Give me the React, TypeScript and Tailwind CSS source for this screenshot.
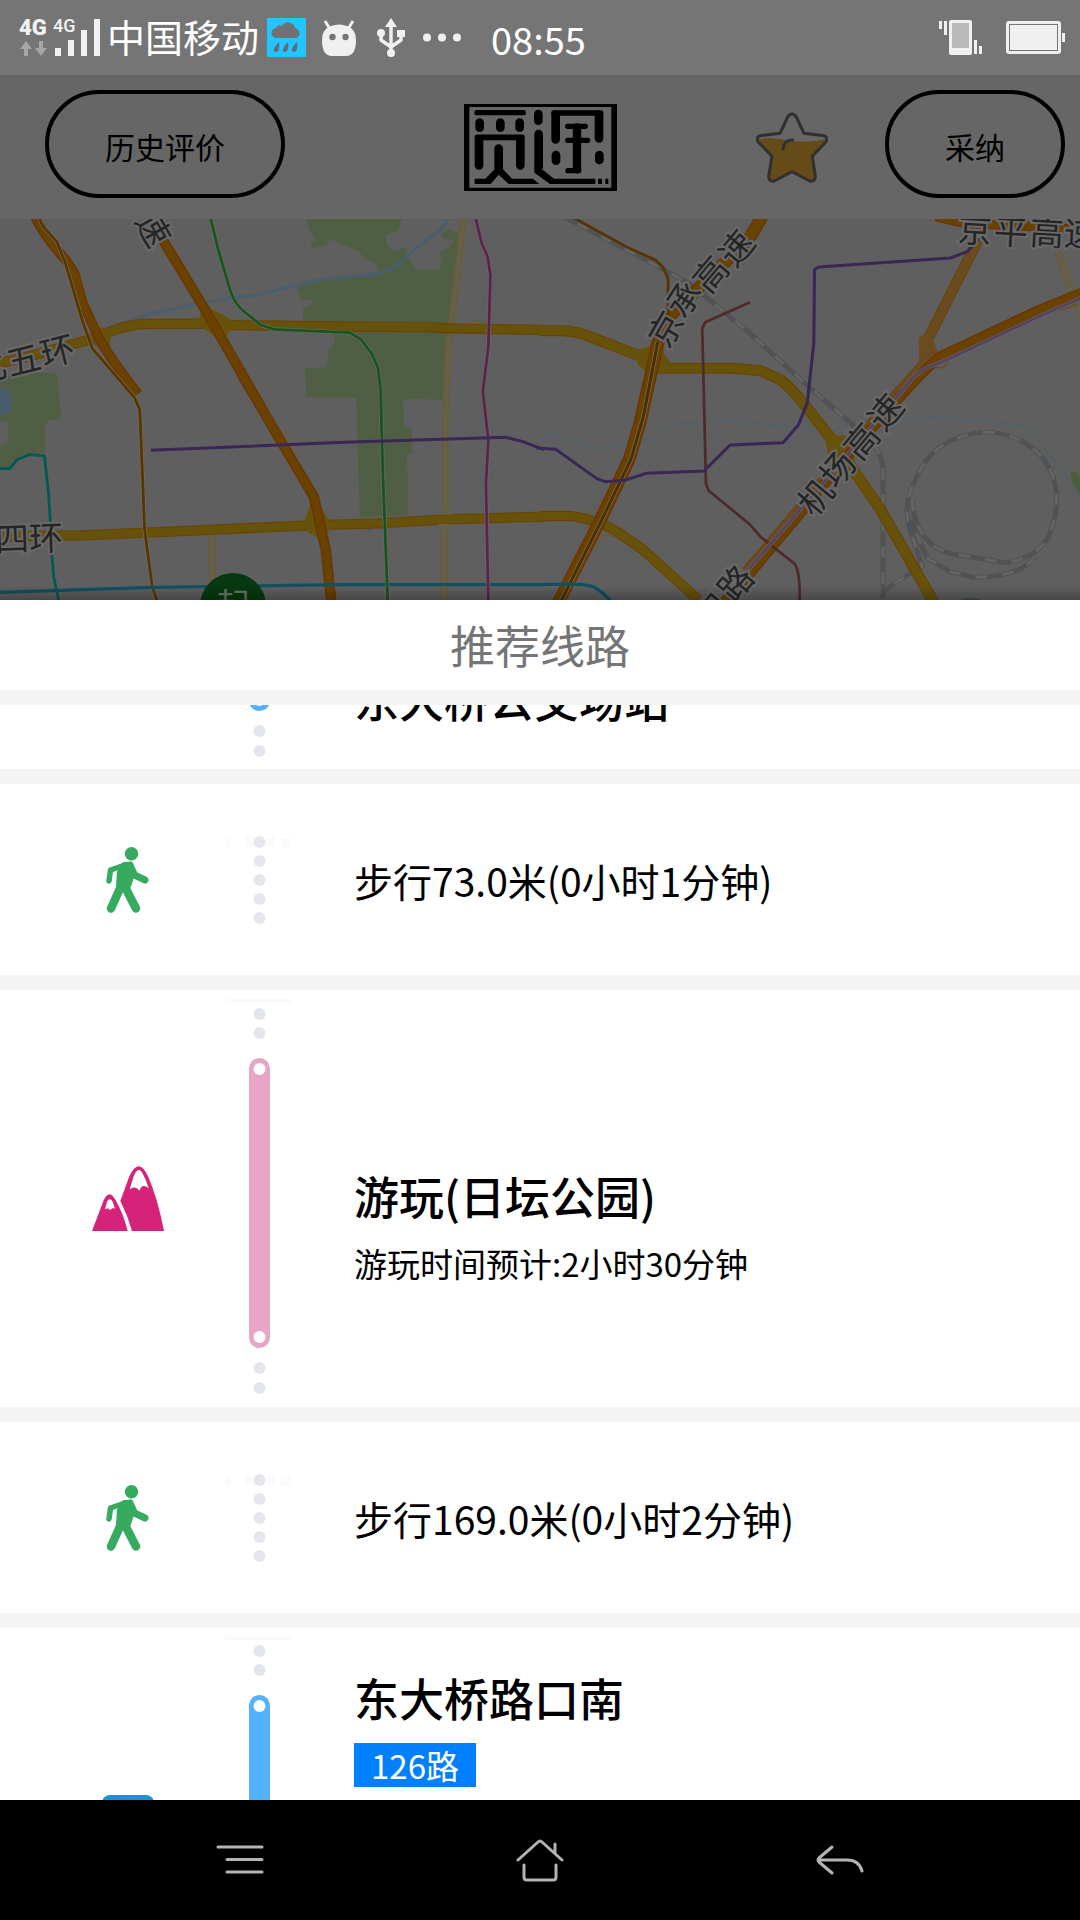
import type { ReactNode } from "react";

type LabelChar = [string, number, number, number];

const mapLabels: LabelChar[] = [
  ["速", 155, 9, 60],
  ["北", -12, 147, -14],
  ["五", 23, 139, -14],
  ["环", 57, 130, -14],
  ["四", 12, 318, -2],
  ["环", 46, 317, -2],
  ["京", 664, 109, -60],
  ["承", 682, 79, -57],
  ["高", 709, 54, -50],
  ["速", 735, 28, -50],
  ["机", 814, 277, -50],
  ["场", 836, 249, -50],
  ["高", 860, 221, -50],
  ["速", 884, 192, -50],
  ["路", 734, 363, -50],
  ["阳", 711, 392, -50],
  ["京", 975, 9, 3],
  ["平", 1011, 11, 3],
  ["高", 1047, 12, 3],
  ["速", 1081, 13, 3],
];

function Line({ d, color, w }: { d: string; color: string; w: number }) {
  return <path d={d} stroke={color} strokeWidth={w} fill="none" strokeLinejoin="round" />;
}

function Road({ d, color, edge, w }: { d: string; color: string; edge: string; w: number }) {
  return (
    <>
      <Line d={d} color={edge} w={w} />
      <Line d={d} color={color} w={w - 7} />
    </>
  );
}

function Rail({ d }: { d: string }) {
  return (
    <>
      <Line d={d} color="#505152" w={14} />
      <Line d={d} color="#646464" w={9} />
      <path d={d} stroke="#515253" strokeWidth={11} strokeDasharray="44 34" fill="none" />
    </>
  );
}

const YELLOW = "#66520a";
const YELLOW_EDGE = "#6b4405";
const ORANGE = "#694200";
const ORANGE_EDGE = "#6c3300";

function CityMap() {
  return (
    <svg
      viewBox="0 0 1080 381"
      preserveAspectRatio="xMidYMin slice"
      className="block h-full w-full bg-[#605f60]"
      role="img"
      aria-label="地图"
    >
      <g transform="scale(.34439 .33333) translate(0 -27)">
        <g fill="#505f44">
          <path d="M888 27H1165L1158 62L1120 76L1124 105L1145 122L1178 110L1184 124L1188 150L1210 178H1278L1280 124L1306 110L1318 90L1285 84L1284 66L1306 60L1332 70L1322 180L1306 340L1300 400L1286 570L1200 566L1170 572L1174 650L1196 652L1198 730L1182 732L1186 915L1045 922L1034 564L890 562L885 474L950 472L954 420L972 398V368L880 330V294L900 290L908 268L876 272L862 232L920 208L1098 186L1092 160L1062 148L1040 124L960 86L950 102L908 118L902 96L918 90L900 62Z" />
          <path d="M0 506L20 490L165 488L177 606L172 626L140 632L130 650V735L84 734L50 750L28 775L0 776V706L22 700L24 640L0 634Z" />
        </g>
        <path d="M0 534Q28 532 32 560Q42 600 22 612L0 618Z" fill="#485c6c" />
        <path d="M1062 958L1080 954L1084 964L1068 964Z" fill="#485c6c" />
        <Line d="M1300 27L1284 55L1200 122L1150 170L1105 190L930 208L750 254L600 275L440 310L320 352" color="#4a5f6b" w={10} />
        <Line d="M1494 637L1535 650M594 1084H620M756 1084H785" color="#4c616b" w={2} />

        <Road d="M1344 27L1330 180L1308 345L1300 420L1293 640V900L1290 960V1175M614 965L618 1120" color="#66604a" edge="#6a5c34" w={19} />
        <Road d="M-10 462L110 432L290 380Q340 350 410 342L600 341L700 346L1240 352L1310 355L1580 360" color={YELLOW} edge={YELLOW_EDGE} w={31} />
        <path d="M574 330L596 288L660 322L680 340L668 362L655 380L640 390L600 362Z" fill={YELLOW} />
        <path d="M275 345Q300 360 325 352L318 415L300 418L262 400Z" fill={YELLOW} />
        <path d="M1362 340Q1385 322 1408 342Z" fill="#66604a" stroke="#6a5c34" strokeWidth="3" />
        <Road d="M-10 980L240 976L560 962L900 946L1100 940L1300 928L1580 920" color={YELLOW} edge={YELLOW_EDGE} w={31} />
        <path d="M885 930L902 880H925L950 922L960 955L945 980L925 985L888 962Z" fill={YELLOW} />
        <path d="M1268 914L1285 898H1304L1314 914ZM1270 942H1316L1302 962H1284Z" fill="#66604a" />

        <Road d="M102 20Q125 75 195 155L216 190L240 280L290 390Q330 460 400 552" color={ORANGE} edge={ORANGE_EDGE} w={29} />
        <Line d="M690 500L725 560" color={ORANGE_EDGE} w={3} />
        <Road d="M474 92L596 300L660 415L785 640L912 862L946 1020L962 1175" color={ORANGE} edge={ORANGE_EDGE} w={30} />
        <path d="M112 20L125 50L165 95L190 160L240 335L268 415L390 562L406 600L420 960L442 1130L457 1175" stroke="#716b5c" strokeWidth={12} fill="none" />
        <Line d="M112 20L125 50L165 95L190 160L240 335L268 415L390 562L406 600L420 960L442 1130L457 1175" color="#573500" w={8} />
        <Line d="M0 776H28L50 749L84 734L129 738L141 850L147 950L151 1040L156 1100L170 1170" color="#005a53" w={8} />
        <Line d="M0 1147L440 1132L1000 1124H1580" color="#12505f" w={10} />
        <Line d="M612 27L634 120L668 240Q680 280 710 306L758 345L796 358L1016 368L1048 388L1080 432L1098 475L1105 540L1112 800L1126 1175" color="#656d64" w={12} />
        <Line d="M612 27L634 120L668 240Q680 280 710 306L758 345L796 358L1016 368L1048 388L1080 432L1098 475L1105 540L1112 800L1126 1175" color="#19541f" w={8} />
        <Line d="M1380 20L1398 98L1416 140L1424 195L1418 410L1402 545L1418 690L1411 820L1418 1175" color="#70646b" w={12} />
        <Line d="M1380 20L1398 98L1416 140L1424 195L1418 410L1402 545L1418 690L1411 820L1418 1175" color="#5a244e" w={8} />
        <Line d="M438 721L1000 697L1468 682L1516 694L1580 719" color="#392755" w={9} />
      </g>

      <g transform="translate(540 0) scale(.34439 .33333) translate(0 -27)">
        <Rail d="M70 20L365 182L440 225L610 370L780 530L915 650Q985 700 996 770V1175" />
        <Rail d="M996 1150Q1005 1130 1110 1070L1075 960Q1050 890 1090 810Q1140 680 1290 666Q1400 668 1465 750Q1530 850 1475 985Q1430 1050 1350 1058L1190 1030Q1090 1000 1080 870" />
        <Rail d="M1075 930L1125 1045L1190 1085L1260 1102Q1400 1100 1435 1040" />
        <Line d="M0 660L170 717L330 684L396 640L560 631L845 666L915 632M1050 638L1130 620L1295 632L1400 645Q1440 670 1460 710L1570 858" color="#4a616b" w={3} />
        <path d="M1540 784L1560 786L1570 800V860L1545 820Z" fill="#4c6040" />
        <ellipse cx="1250" cy="1176" rx="34" ry="12" fill="#38505a" />
        <Road d="M1500 110L1545 250L1575 320" color="#66604a" edge="#6a5c34" w={19} />
        <Road d="M0 362H70Q110 365 150 382L290 438L360 475H560L640 482L700 510Q730 535 765 580L860 705L990 900L1090 1080L1145 1180" color={YELLOW} edge={YELLOW_EDGE} w={33} />
        <path d="M272 424L318 408L325 390H356L360 430L380 462L350 492L312 490L285 465Z" fill={YELLOW} />
        <path d="M828 690L848 674L890 678L880 705L915 740L905 780L860 790L836 730Z" fill={YELLOW} />
        <Line d="M110 915L165 895L180 870M195 900V945M165 1010L185 975L220 980" color="#6a5c34" w={4} />
        <Road d="M0 918H90Q170 930 225 966L300 1020L460 1170" color={YELLOW} edge={YELLOW_EDGE} w={31} />

        <Road d="M645 20L608 85L460 235L380 315L342 400L290 640L260 745L180 920L52 1180" color={ORANGE} edge={ORANGE_EDGE} w={37} />
        <Road d="M1272 90L1120 400L1135 440L1030 560L890 730L600 1085" color="#6a4c20" edge="#6c4410" w={32} />
        <path d="M1100 385L1130 360L1155 425L1100 455Z" fill="#6a4c20" />
        <Road d="M1580 245L1440 304L1160 440L1090 510L890 740L760 905L610 1090L530 1180" color={ORANGE} edge={ORANGE_EDGE} w={30} />
        <Road d="M1150 20L1230 40L1580 58" color={ORANGE} edge={ORANGE_EDGE} w={28} />
        <Line d="M1140 470L1170 474L1185 456M1510 300L1560 284" color="#6c4d10" w={4} />
        <Line d="M342 396L300 620L264 748L180 928L58 1180" color="#77705f" w={13} />
        <Line d="M342 396L300 620L264 748L180 928L58 1180" color="#4c2e00" w={9} />
        <Line d="M92 20L250 110L335 150L356 170L372 206V330" color="#573500" w={8} />
        <Line d="M0 1123H120L155 1130Q180 1145 205 1172" color="#12505f" w={10} />
        <Line d="M610 277L480 337L471 355L482 822L490 842L608 942L640 980L740 1062Q756 1090 754 1175" color="#4f2a2b" w={8} />
        <Line d="M-10 714L46 718L165 806L190 815L245 811L308 790L476 783L552 705L706 698L750 645L776 580L795 400L797 180Q802 170 820 170L1192 144L1242 124L1274 84" color="#392755" w={9} />
        <Line d="M1580 260L1440 324L1170 455L1120 474L1085 500L1030 570L600 1085" color="#716876" w={12} />
        <Line d="M1580 260L1440 324L1170 455L1120 474L1085 500L1030 570L600 1085" color="#54445f" w={9} />
      </g>

      <g
        fontSize="34"
        fill="#252525"
        stroke="#696969"
        strokeWidth="4"
        paintOrder="stroke"
        textAnchor="middle"
        dominantBaseline="central"
      >
        {mapLabels.map(([ch, x, y, r], i) => (
          <text key={i} x={x} y={y} transform={`rotate(${r} ${x} ${y})`}>
            {ch}
          </text>
        ))}
      </g>
      <circle cx="233" cy="387" r="33" fill="#06390f" />
      <text x="233" y="384" fontSize="34" fill="#667868" textAnchor="middle" dominantBaseline="central">
        起
      </text>
      <defs>
        <linearGradient id="sheetShade" x1="0" y1="0" x2="0" y2="1">
          <stop offset="0" stopColor="#000" stopOpacity="0" />
          <stop offset="1" stopColor="#000" stopOpacity=".25" />
        </linearGradient>
      </defs>
      <rect y="367" width="1080" height="14" fill="url(#sheetShade)" />
    </svg>
  );
}

function StatusBar() {
  return (
    <div className="flex h-[75px] shrink-0 items-center justify-between bg-[#757575] pr-[15px] pl-[18px] text-white">
      <div className="flex items-center">
        <svg width="84" height="52" viewBox="-1 -6 84 52" aria-label="4G">
          <g fill="#f2f2f2" fontFamily="Roboto, sans-serif">
            <text x="0" y="17" fontSize="22" fontWeight="900">4G</text>
            <text x="34" y="14" fontSize="18" fontWeight="500">4G</text>
            <path d="M36 30h6v8h-6zM49 22h6v16h-6zM62 12h6v26h-6zM75 1h6v37h-6z" />
          </g>
          <path d="M7 23l-6 8h4v7h4v-7h4zM22 38l6-8h-4v-7h-4v7h-4z" fill="#a6a6a6" />
        </svg>
        <span className="ml-[5px] pb-1 text-[38px] leading-[44px]">中国移动</span>
        <svg className="ml-2" width="39" height="39" viewBox="0 0 39 39">
          <rect width="39" height="39" rx="1" fill="#22c5ff" />
          <path d="M10 20a5 5 0 0 1-1-10 4 4 0 0 1 6-2 7 7 0 0 1 13 2 5.500 5.500 0 0 1 2 10z" fill="#6f7173" />
          <path d="M12 24q1 6-1 9-2 2-4 0-1-3 5-9zM21 24q1 6-1 9-2 2-4 0-1-3 5-9zM30 24q1 6-1 9-2 2-4 0-1-3 5-9z" fill="#5f6c72" />
        </svg>
        <svg className="ml-4" width="34" height="36" viewBox="0 0 34 36">
          <path d="M3 1l5 8M31 1l-5 8" stroke="#f0f0f0" strokeWidth="3" />
          <path d="M9 6Q17 3 25 6Q34 9 34 20Q34 36 24 36H10Q0 36 0 20Q0 9 9 6Z" fill="#f0f0f0" />
          <circle cx="10.500" cy="17" r="3.200" fill="#757575" />
          <circle cx="23.500" cy="17" r="3.200" fill="#757575" />
        </svg>
        <svg className="ml-[21px]" width="28" height="39" viewBox="0 0 28 39" fill="#f0f0f0">
          <path d="M14 0l6 9H8z" />
          <path d="M14 6v28M4 15v7l10 7 10-7v-7" fill="none" stroke="#f0f0f0" strokeWidth="3.500" strokeLinejoin="round" />
          <circle cx="14" cy="35" r="4" />
          <circle cx="4" cy="15" r="4" />
          <path d="M20 12h8v7h-8z" />
        </svg>
        <svg className="ml-[18px]" width="38" height="9" viewBox="0 0 38 9" fill="#f0f0f0">
          <circle cx="4" cy="4.500" r="4" />
          <circle cx="19" cy="4.500" r="4" />
          <circle cx="34" cy="4.500" r="4" />
        </svg>
        <span className="ml-[30px] pt-0.5 text-[38px] leading-[44px]">08:55</span>
      </div>
      <div className="flex items-center gap-6">
        <svg width="43" height="35" viewBox="0 0 43 35" fill="#f0f0f0">
          <path d="M0 1h3v8H0zM5 1h3v14H5zM35 20h3v14h-3zM40 26h3v8h-3z" />
          <rect x="10" width="23" height="35" rx="2" />
          <path d="M13 3h17v25H13z" fill="#b9b9b9" />
        </svg>
        <svg width="59" height="33" viewBox="0 0 59 33" fill="#f0f0f0">
          <rect width="55" height="33" rx="3" />
          <rect x="3.500" y="3.500" width="48" height="26" fill="#f0f0f0" stroke="#757575" />
          <path d="M56 12h3v9h-3z" />
        </svg>
      </div>
    </div>
  );
}

function Logo() {
  return (
    <svg width="153" height="87" viewBox="74 42 459 261" role="img" aria-label="觅逛">
      <path d="M74 42H533V303H74ZM90 51V293H516V51Z" fillRule="evenodd" />
      <g fill="none" stroke="#000" strokeLinecap="round">
        <path d="M113 68H252" strokeWidth="16" />
        <path d="M121 98V113M183 98V113M241 98V113" strokeWidth="26" />
        <path d="M119 226V150M243 226V150" strokeWidth="26" />
        <path d="M114 142H248" strokeWidth="17" />
        <path d="M178 176V235" strokeWidth="26" />
        <path d="M297 72V92M298 132V230" strokeWidth="26" />
        <path d="M349 74V148M479 74V145M350 195V212M480 195V210" strokeWidth="26" />
        <path d="M344 69H484" strokeWidth="17" />
        <path d="M385 109H438M385 151H445M386 242H418" strokeWidth="16" />
        <path d="M413 112V238" strokeWidth="25" />
      </g>
      <path d="M106 266H138L166 238H191L218 266H281L300 282H208L178 254L154 282H106ZM285 232L311 240L344 266H468V282H332L285 248ZM476 266H488V282H476ZM498 266H507V282H498Z" />
    </svg>
  );
}

function Star() {
  return (
    <svg width="72" height="71" viewBox="468 335 216 213">
      <path d="M474 416Q530 410 572 422Q630 428 680 416L637 468L646 530Q644 546 628 542L576 514L524 542Q508 546 506 530L516 468Z" fill="#644b18" />
      <path
        d="M563 350Q576 332 589 350L612 399L672 406Q686 412 678 424L637 468L646 528Q645 545 629 542L576 514L523 542Q507 545 506 528L516 468L474 424Q466 412 480 406L540 399Z"
        fill="none"
        stroke="#303030"
        strokeWidth="9"
        strokeLinejoin="round"
      />
      <path d="M549 447Q552 418 578 419" fill="none" stroke="#303030" strokeWidth="9" strokeLinecap="round" />
    </svg>
  );
}

function PillButton({ children, className }: { children: ReactNode; className: string }) {
  return (
    <button
      type="button"
      className={`h-[108px] rounded-full border-4 border-black pt-1 text-[30px] leading-10 text-black ${className}`}
    >
      {children}
    </button>
  );
}

function WalkIcon() {
  return (
    <svg width="43" height="66" viewBox="0 0 43 66" fill="none" stroke="#36ab60" strokeLinecap="round" strokeLinejoin="round" role="img" aria-label="步行">
      <circle cx="25.500" cy="6.700" r="6.700" fill="#36ab60" stroke="none" />
      <path d="M19 18L4.500 23L3 34" strokeWidth="5.500" />
      <path d="M24 18L28.500 28L39 33" strokeWidth="7" />
      <path d="M18 17L25 17L27 27L23 39L12 39L13 25Z" fill="#36ab60" strokeWidth="4" />
      <path d="M15.500 38L5 61.500M18 38L30 61.500" strokeWidth="8.500" />
    </svg>
  );
}

function MountainIcon() {
  return (
    <svg width="72" height="65" viewBox="96 557 216 195" role="img" aria-label="游玩">
      <g fill="#d5237b">
        <path d="M96 752L131 660Q148 624 167 660Q190 700 203 752Z" />
        <path d="M181 662L208 588Q236 528 264 588Q292 650 312 752H216Q203 705 181 662Z" />
      </g>
      <path d="M135 687L141 664Q149 650 158 664L165 685L159 683L150 689L143 684Z" fill="#fff" />
      <path d="M209 627L221 588Q235 554 249 582Q260 602 266 624Q252 612 244 620L238 631Q226 614 209 627Z" fill="#fff" />
    </svg>
  );
}

function BusIcon() {
  return (
    <svg width="52" height="82" viewBox="0 0 52 82" role="img" aria-label="公交">
      <rect width="52" height="74" rx="8" fill="#1296db" />
      <path d="M16 6h20v3H16z" fill="#8fd0f0" />
      <path d="M6 16h40v28H6z" fill="#fff" />
      <circle cx="12" cy="58" r="5" fill="#fff" />
      <circle cx="40" cy="58" r="5" fill="#fff" />
      <path d="M6 74h9v8H6zM37 74h9v8h-9z" fill="#1296db" />
    </svg>
  );
}

function StageTrack({ color }: { color: string }) {
  return (
    <svg className="shrink-0" width="66" height="415" viewBox="0 0 66 415">
      <path d="M0 10H66" stroke="#fafafa" strokeWidth="4" />
      <g fill="#e3e6ed">
        <circle cx="34.500" cy="23" r="6" />
        <circle cx="34.500" cy="42" r="6" />
        <circle cx="34.500" cy="377" r="6" />
        <circle cx="34.500" cy="397" r="6" />
      </g>
      <rect x="24" y="67" width="21" height="290" rx="10.500" fill={color} />
      <circle cx="34.500" cy="78" r="6" fill="#fff" />
      <circle cx="34.500" cy="346" r="6" fill="#fff" />
    </svg>
  );
}

function WalkTrack() {
  return (
    <svg width="66" height="90" viewBox="0 0 66 90">
      <path d="M0 8H6M20 7H30M40 7H50M56 8H66" stroke="#fbfbfb" strokeWidth="10" />
      <g fill="#e5e7ed">
        <circle cx="34.500" cy="7" r="6" />
        <circle cx="34.500" cy="26" r="6" />
        <circle cx="34.500" cy="45" r="6" />
        <circle cx="34.500" cy="64" r="6" />
        <circle cx="34.500" cy="83" r="6" />
      </g>
    </svg>
  );
}

const ROW = "grid shrink-0 grid-cols-[225px_66px_1fr] bg-white";

function WalkRow({ text }: { text: string }) {
  return (
    <li className={`${ROW} h-[191px] items-center`}>
      <div className="flex justify-center pl-[30px]">
        <WalkIcon />
      </div>
      <WalkTrack />
      <p className="pl-[63px] text-[39px] leading-[52px]">{text}</p>
    </li>
  );
}

export default function App() {
  return (
    <div className="flex h-screen flex-col overflow-hidden bg-[#f4f4f4] font-['Noto_Sans_CJK_SC','Noto_Sans',sans-serif] text-black">
      <StatusBar />
      <header className="grid h-36 shrink-0 grid-cols-[1fr_auto_1fr] items-center bg-[#666666] pb-1.5">
        <div className="flex pl-[45px]">
          <PillButton className="w-60">历史评价</PillButton>
        </div>
        <div className="pt-1.5">
          <Logo />
        </div>
        <div className="flex items-center justify-end gap-[57px] pr-[15px]">
          <button type="button" aria-label="收藏" className="pt-1.5">
            <Star />
          </button>
          <PillButton className="w-[180px]">采纳</PillButton>
        </div>
      </header>
      <div className="h-[381px] shrink-0">
        <CityMap />
      </div>

      <h1 className="h-[90px] shrink-0 bg-white pt-[15px] text-center text-[45px] leading-[60px] font-normal text-[#757575]">
        推荐线路
      </h1>
      <ul className="flex min-h-0 flex-1 flex-col gap-[15px] overflow-hidden pt-[15px]">
        <li className={`${ROW} h-16 grid-rows-[64px] items-end overflow-hidden`}>
          <span />
          <StageTrack color="#54b1fb" />
          <h2 className="pb-10 pl-[63px] text-[45px] leading-[60px] font-medium">东大桥公交场站</h2>
        </li>
        <WalkRow text="步行73.0米(0小时1分钟)" />
        <li className={`${ROW} h-[417px] items-center`}>
          <div className="flex justify-center pl-[30px]">
            <MountainIcon />
          </div>
          <StageTrack color="#e7a5c8" />
          <div className="flex flex-col gap-[15px] pt-[53px] pl-[63px]">
            <h2 className="text-[45px] leading-[60px] font-medium">游玩(日坛公园)</h2>
            <p className="text-[33px] leading-[44px]">游玩时间预计:2小时30分钟</p>
          </div>
        </li>
        <WalkRow text="步行169.0米(0小时2分钟)" />
        <li className={`${ROW} h-[415px]`}>
          <div className="flex items-center justify-center pl-[30px]">
            <BusIcon />
          </div>
          <StageTrack color="#54b1fb" />
          <div className="flex flex-col items-start gap-[15px] pt-10 pl-[63px]">
            <h2 className="text-[45px] leading-[60px] font-medium">东大桥路口南</h2>
            <span className="bg-[#007fff] px-[17px] text-[33px] leading-[44px] text-white">126路</span>
          </div>
        </li>
      </ul>

      <nav className="grid h-[120px] shrink-0 grid-cols-3 items-center justify-items-center bg-black px-[90px]">
        <button type="button" aria-label="菜单">
          <svg width="48" height="30" viewBox="0 0 48 30" stroke="#b4b4b4" strokeWidth="3" strokeLinecap="round">
            <path d="M2 2H46M11 14.500H46M11 27H46" />
          </svg>
        </button>
        <button type="button" aria-label="主页">
          <svg width="48" height="43" viewBox="0 0 48 43" fill="none" stroke="#b4b4b4" strokeWidth="3" strokeLinecap="round" strokeLinejoin="round">
            <path d="M2 21L22 3Q24 1 26 3L46 21M39 5V14M8 26V38Q8 41 11 41H37Q40 41 40 38V26" />
          </svg>
        </button>
        <button type="button" aria-label="返回">
          <svg width="48" height="30" viewBox="0 0 48 30" fill="none" stroke="#b4b4b4" strokeWidth="3" strokeLinecap="round" strokeLinejoin="round">
            <path d="M16 2L3 13Q1 15 3 17L16 28M3 15H31Q43 15 46 26" />
          </svg>
        </button>
      </nav>
    </div>
  );
}
